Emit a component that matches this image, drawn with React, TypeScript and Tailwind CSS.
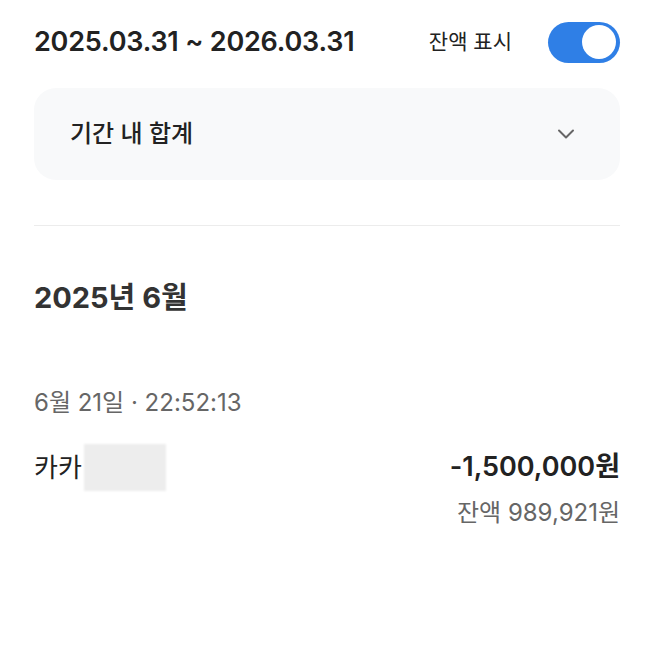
import React, { useState } from 'react';
import { ChevronDown } from 'lucide-react';

const font = { fontFamily: 'Inter, "Noto Sans CJK KR", sans-serif' };

export default function App() {
  const [showBalance, setShowBalance] = useState(true);

  return (
    <div className="w-[658px] h-[667px] bg-white pl-[34px] pr-[38px] pt-[20px] text-[#222]" style={font}>
      {/* period + balance toggle */}
      <div className="flex items-center justify-between h-[44px]">
        <div className="text-[27px] font-semibold tracking-[-0.2px] leading-[44px]">2025.03.31 ~ 2026.03.31</div>
        <div className="flex items-center gap-[36px]">
          <span className="text-[21px] text-[#222]">잔액 표시</span>
          <button
            onClick={() => setShowBalance(!showBalance)}
            className={`w-[72px] h-[41px] rounded-full flex items-center px-[4px] ${
              showBalance ? 'bg-[#2f7fe6] justify-end' : 'bg-gray-300 justify-start'
            }`}
          >
            <span className="w-[34px] h-[34px] rounded-full bg-white block" />
          </button>
        </div>
      </div>

      <div className="mt-[24px] h-[92px] rounded-[22px] bg-[#f8f9fa] flex items-center justify-between pl-[36px] pr-[40px]">
        <span className="text-[24px] font-medium">기간 내 합계</span>
        <ChevronDown className="w-[28px] h-[28px] text-[#666]" strokeWidth={1.7} />
      </div>

      <div className="mt-[45px] h-px bg-[#ececec]" />

      <div className="mt-[52px] h-[40px] leading-[40px] text-[29px] font-bold text-[#333]">2025년 6월</div>

      <div className="mt-[68px] h-[34px] leading-[34px] text-[24px] text-[#666]">6월 21일 · 22:52:13</div>

      <div className="mt-[23px] flex items-start justify-between">
        <div className="flex items-center h-[48px]">
          <span className="text-[26px]">카카</span>
          <span className="ml-[2px] w-[82px] h-[47px] bg-[#ededed] blur-[1px]" />
        </div>
        <div className="flex flex-col items-end">
          <span className="text-[27px] font-semibold h-[48px] leading-[48px]">-1,500,000원</span>
          <span className="text-[24px] text-[#666] h-[36px] leading-[36px] mt-[4px]">
            {showBalance ? '잔액 989,921원' : ''}
          </span>
        </div>
      </div>
    </div>
  );
}
